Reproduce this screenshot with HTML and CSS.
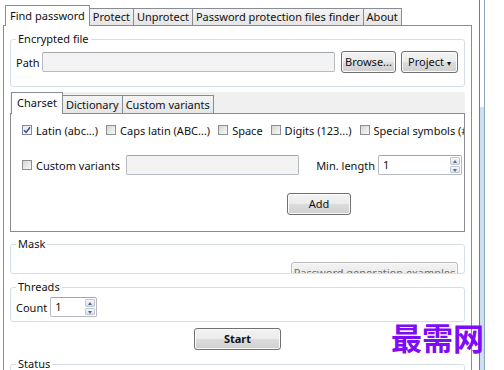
FILE: index.html
```html
<!DOCTYPE html>
<html lang="en">
<head>
    <meta charset="UTF-8">
    <title>Find password</title>
    <link rel="stylesheet" href="styles.css">
</head>
<body>
    <div class="window">
        <div class="app">
            <div class="tabs">
                <div class="tab active">Find password</div>
                <div class="tab">Protect</div>
                <div class="tab">Unprotect</div>
                <div class="tab">Password protection files finder</div>
                <div class="tab">About</div>
            </div>
            <div class="page">
                <fieldset class="group file-group">
                    <legend>Encrypted file</legend>
                    <div class="path-row">
                        <span class="label">Path</span>
                        <div class="textbox path-box"></div>
                        <div class="btn browse">Browse...</div>
                        <div class="btn project">Project <span class="caret">&#9662;</span></div>
                    </div>
                </fieldset>

                <div class="subtabs">
                    <div class="subtab active">Charset</div>
                    <div class="subtab">Dictionary</div>
                    <div class="subtab">Custom variants</div>
                </div>
                <div class="subpage">
                    <div class="checks">
                        <div class="check">
                            <span class="cb on">
                                <svg width="8" height="8" viewBox="0 0 8 8"><path d="M1 4.2 L3.1 6.4 L7 1.2" fill="none" stroke="#3b4f86" stroke-width="1.5"/></svg>
                            </span>
                            <span>Latin (abc...)</span>
                        </div>
                        <div class="check"><span class="cb"></span><span>Caps latin (ABC...)</span></div>
                        <div class="check"><span class="cb"></span><span>Space</span></div>
                        <div class="check"><span class="cb"></span><span>Digits (123...)</span></div>
                        <div class="check"><span class="cb"></span><span>Special symbols (#$%...)</span></div>
                    </div>
                    <div class="variants-row">
                        <div class="check"><span class="cb"></span><span>Custom variants</span></div>
                        <div class="textbox variants-box"></div>
                        <span class="label min-label">Min. length</span>
                        <div class="spin min-spin">
                            <span class="spin-value">1</span>
                            <span class="spin-btns"><span class="up"></span><span class="down"></span></span>
                        </div>
                    </div>
                    <div class="add-row">
                        <div class="btn add">Add</div>
                    </div>
                </div>

                <fieldset class="group mask-group">
                    <legend>Mask</legend>
                    <div class="examples-row">
                        <div class="btn examples">Password generation examples</div>
                    </div>
                </fieldset>

                <fieldset class="group threads-group">
                    <legend>Threads</legend>
                    <div class="count-row">
                        <span class="label">Count</span>
                        <div class="spin count-spin">
                            <span class="spin-value">1</span>
                            <span class="spin-btns"><span class="up"></span><span class="down"></span></span>
                        </div>
                    </div>
                </fieldset>

                <div class="start-row">
                    <div class="btn start">Start</div>
                </div>

                <fieldset class="group status-group">
                    <legend>Status</legend>
                </fieldset>
            </div>
        </div>
        <div class="edge"></div>
    </div>
    <div class="watermark">最需网</div>
</body>
</html>
```

FILE: styles.css
```css
* {
    box-sizing: border-box;
}
html, body {
    margin: 0;
    padding: 0;
    background-color: #ffffff;
}
body {
    font-family: "Noto Sans", sans-serif;
    font-size: 11px;
    color: #111111;
    width: 504px;
    height: 370px;
    overflow: hidden;
    position: relative;
}

.window {
    display: flex;
    height: 370px;
}
.app {
    width: 472px;
    padding: 5px 0 0 3px;
}
.edge {
    width: 6px;
    margin-left: 7px;
    border-left: 1px solid #6d7c8e;
    border-right: 1px solid #8da4bd;
    background: linear-gradient(#ffffff 0, #ffffff 107px, #cddff1 107px);
}

/* main tabs */
.tabs {
    display: flex;
    align-items: flex-end;
    height: 21px;
    margin-left: 2px;
}
.tab {
    height: 18px;
    line-height: 16px;
    padding: 0 3px;
    border: 1px solid #898c95;
    border-bottom: none;
    background: linear-gradient(#f4f4f4, #e4e4e4);
    margin-left: -1px;
    white-space: nowrap;
}
.tab.active {
    height: 21px;
    line-height: 19px;
    padding: 0 4px;
    margin-left: 0;
    background: #ffffff;
    position: relative;
    z-index: 2;
}
.page {
    position: relative;
    z-index: 1;
    margin-top: -1px;
    height: 346px;
    border: 1px solid #898c95;
    background: #ffffff;
    padding: 5px 6px 0 6px;
}

/* group boxes */
.group {
    margin: 0;
    min-width: 0;
    border: 1px solid #d5dfe5;
    border-radius: 3px;
    padding: 0 6px 0 5px;
}
.group legend {
    padding: 0 2px;
    margin-left: 0;
    line-height: 16px;
}
.label {
    white-space: nowrap;
}

.path-row {
    display: flex;
    align-items: center;
    margin-top: 4px;
    padding-bottom: 13px;
}
.path-row .label {
    margin-right: 2px;
}
.textbox {
    height: 20px;
    border: 1px solid #b5b9c2;
    border-top-color: #a0a4ad;
    border-radius: 2px;
    background: #f3f3f3;
}
.path-box {
    flex: 1;
}
.btn {
    height: 22px;
    line-height: 20px;
    text-align: center;
    white-space: nowrap;
    border: 1px solid #707070;
    border-radius: 3px;
    background: linear-gradient(#f3f3f3 0%, #ebebeb 50%, #dddddd 51%, #cfcfcf 100%);
    box-shadow: inset 0 0 0 1px #fbfbfb;
}
.browse {
    width: 55px;
    margin-left: 6px;
}
.project {
    width: 57px;
    margin-left: 5px;
}
.caret {
    font-size: 8px;
}

/* charset tabs */
.subtabs {
    display: flex;
    align-items: flex-end;
    height: 22px;
    margin-top: 5px;
    padding-left: 1px;
    background: #f0f0f0;
}
.subtab {
    height: 19px;
    line-height: 17px;
    padding: 0 3px;
    border: 1px solid #898c95;
    border-bottom: none;
    background: linear-gradient(#f4f4f4, #e4e4e4);
    margin-left: -1px;
    white-space: nowrap;
}
.subtab.active {
    height: 22px;
    line-height: 19px;
    margin-left: 0;
    padding: 0 5px;
    background: #ffffff;
    position: relative;
    z-index: 2;
}
.subpage {
    position: relative;
    z-index: 1;
    margin-top: -1px;
    height: 119px;
    border: 1px solid #898c95;
    background: #ffffff;
    padding: 8px 0 0 11px;
    overflow: hidden;
}
.checks {
    display: flex;
    align-items: center;
    gap: 8px;
    height: 16px;
    white-space: nowrap;
}
.check {
    display: flex;
    align-items: center;
    gap: 4px;
    white-space: nowrap;
    flex: none;
}
.cb {
    width: 10px;
    height: 10px;
    border: 1px solid #8e8f8f;
    background: linear-gradient(135deg, #d6d6d6, #f8f8f8);
    display: flex;
    align-items: center;
    justify-content: center;
    flex: none;
}
.cb.on {
    background: linear-gradient(135deg, #e2e6ee, #ffffff);
    border-color: #7d8aa8;
}
.variants-row {
    display: flex;
    align-items: center;
    margin-top: 17px;
}
.variants-box {
    width: 173px;
    margin-left: 6px;
}
.min-label {
    margin-left: 17px;
}
.spin {
    display: flex;
    height: 20px;
    border: 1px solid #b5b9c2;
    border-top-color: #a0a4ad;
    border-radius: 2px;
    background: #ffffff;
}
.spin-value {
    flex: 1;
    padding-left: 4px;
    line-height: 18px;
}
.spin-btns {
    width: 12px;
    display: flex;
    flex-direction: column;
    gap: 1px;
    padding: 1px;
}
.spin-btns span {
    flex: 1;
    border: 1px solid #c3c8d0;
    border-radius: 1px;
    background: linear-gradient(#f4f6f8, #dde2e8);
    position: relative;
}
.spin-btns .up::after,
.spin-btns .down::after {
    content: "";
    position: absolute;
    left: 2px;
    border-left: 2px solid transparent;
    border-right: 2px solid transparent;
}
.spin-btns .up::after {
    top: 2px;
    border-bottom: 3px solid #4f6a8f;
}
.spin-btns .down::after {
    top: 2px;
    border-top: 3px solid #4f6a8f;
}
.min-spin {
    width: 84px;
    margin-left: 3px;
}
.add-row {
    display: flex;
    margin-top: 18px;
    padding-left: 265px;
}
.add {
    width: 64px;
}

/* mask, threads, status */
.mask-group {
    margin-top: 4px;
    height: 38px;
    overflow: hidden;
}
.examples-row {
    display: flex;
    justify-content: flex-end;
    margin-top: 10px;
}
.examples {
    width: 167px;
    border-color: #b9b9b9;
    color: #6d6d6d;
}
.threads-group {
    margin-top: 5px;
}
.count-row {
    display: flex;
    align-items: center;
    gap: 3px;
    margin-top: 2px;
    padding-bottom: 4px;
}
.count-spin {
    width: 47px;
}
.start-row {
    display: flex;
    justify-content: center;
    margin-top: 6px;
}
.start {
    width: 87px;
    font-weight: bold;
}
.status-group {
    margin-top: 6px;
    height: 14px;
}

.watermark {
    position: absolute;
    left: 391px;
    top: 317px;
    font-family: "Noto Sans CJK SC", sans-serif;
    font-size: 31px;
    font-weight: bold;
    line-height: 40px;
    color: #7f0cf6;
    z-index: 5;
}
```
